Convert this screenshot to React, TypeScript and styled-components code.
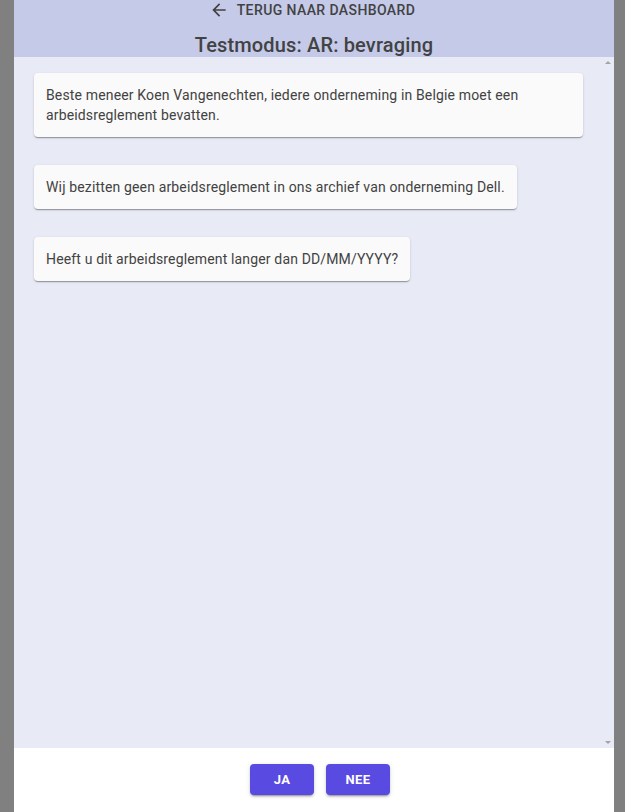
import React from "react";
import styled, { createGlobalStyle } from "styled-components";

const Global = createGlobalStyle`
  html, body { margin: 0; padding: 0; }
  body {
    background: #808080;
    font-family: Roboto, "Noto Sans", Arial, sans-serif;
    -webkit-font-smoothing: antialiased;
  }
  * { box-sizing: border-box; }
`;

const Page = styled.div`
  width: 625px;
  height: 812px;
  display: flex;
  padding-left: 14px;
  overflow: hidden;
`;

const Panel = styled.main`
  width: 600px;
  height: 812px;
  display: flex;
  flex-direction: column;
  color: #424242;
`;

const Header = styled.header`
  height: 57px;
  flex: none;
  background: #c5cae9;
  display: flex;
  flex-direction: column;
  align-items: center;
`;

const BackButton = styled.button`
  height: 20px;
  display: inline-flex;
  align-items: center;
  padding: 0 16px;
  border: none;
  background: transparent;
  color: #424242;
  font-family: Roboto, sans-serif;
  font-size: 14px;
  font-weight: 500;
  letter-spacing: 0.4px;
  text-transform: uppercase;
  line-height: 20px;
  cursor: pointer;
  svg {
    width: 20px;
    height: 20px;
    margin-left: -4px;
    margin-right: 8px;
  }
`;

const Title = styled.h1`
  margin: 13px 0 0;
  font-size: 20px;
  font-weight: 500;
  line-height: 24px;
  letter-spacing: 0.15px;
  color: #424242;
`;

const Content = styled.section`
  flex: 1;
  position: relative;
  background: #e8eaf6;
  padding: 16px 31px 16px 20px;
  display: flex;
  flex-direction: column;
  align-items: flex-start;
  gap: 28px;
  overflow: hidden;
`;

const Message = styled.div`
  background: #fafafa;
  border-radius: 4px;
  padding: 12px;
  font-size: 14px;
  line-height: 20px;
  letter-spacing: 0.15px;
  color: #424242;
  max-width: 100%;
  box-shadow: 0px 2px 1px -1px rgba(0, 0, 0, 0.2),
    0px 1px 1px 0px rgba(0, 0, 0, 0.14), 0px 1px 3px 0px rgba(0, 0, 0, 0.12);
`;

const ScrollArrow = styled.span<{ $down?: boolean }>`
  position: absolute;
  right: 3px;
  ${(p) => (p.$down ? "bottom: 4px;" : "top: 4px;")}
  width: 0;
  height: 0;
  border-left: 3px solid transparent;
  border-right: 3px solid transparent;
  ${(p) =>
    p.$down
      ? "border-top: 3px solid #a3a3a3;"
      : "border-bottom: 3px solid #a3a3a3;"}
`;

const Footer = styled.footer`
  height: 64px;
  flex: none;
  background: #ffffff;
  display: flex;
  justify-content: center;
  align-items: flex-start;
  padding: 16px 0 0 12px;
  gap: 12px;
`;

const ActionButton = styled.button`
  min-width: 64px;
  height: 31px;
  padding: 4px 10px;
  border: none;
  border-radius: 4px;
  background: #594ae2;
  color: #ffffff;
  font-family: Roboto, sans-serif;
  font-size: 13px;
  font-weight: 700;
  letter-spacing: 0.4px;
  text-transform: uppercase;
  cursor: pointer;
  box-shadow: 0px 3px 1px -2px rgba(0, 0, 0, 0.2),
    0px 2px 2px 0px rgba(0, 0, 0, 0.14), 0px 1px 5px 0px rgba(0, 0, 0, 0.12);
`;

const ArrowBack = () => (
  <svg viewBox="0 0 24 24" fill="currentColor" aria-hidden="true">
    <path d="M20 11H7.83l5.59-5.59L12 4l-8 8 8 8 1.41-1.41L7.83 13H20v-2z" />
  </svg>
);

const messages = [
  "Beste meneer Koen Vangenechten, iedere onderneming in Belgie moet een arbeidsreglement bevatten.",
  "Wij bezitten geen arbeidsreglement in ons archief van onderneming Dell.",
  "Heeft u dit arbeidsreglement langer dan DD/MM/YYYY?",
];

export default function App() {
  return (
    <>
      <Global />
      <Page>
        <Panel>
          <Header>
            <BackButton>
              <ArrowBack />
              Terug naar dashboard
            </BackButton>
            <Title>Testmodus: AR: bevraging</Title>
          </Header>
          <Content>
            {messages.map((m) => (
              <Message key={m}>{m}</Message>
            ))}
            <ScrollArrow />
            <ScrollArrow $down />
          </Content>
          <Footer>
            <ActionButton>Ja</ActionButton>
            <ActionButton>Nee</ActionButton>
          </Footer>
        </Panel>
      </Page>
    </>
  );
}
